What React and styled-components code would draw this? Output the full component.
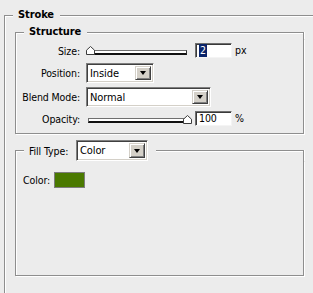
import React from "react";
import styled, { createGlobalStyle } from "styled-components";

const GlobalStyle = createGlobalStyle`
  html, body {
    margin: 0;
    padding: 0;
    background: #ececec;
    overflow: hidden;
  }
  body {
    font-family: "DejaVu Sans Condensed", "DejaVu Sans", sans-serif;
    font-stretch: condensed;
    font-size: 10.5px;
    letter-spacing: -0.1px;
    color: #000;
  }
`;

const GRAY = "#8e8e8e";

const Page = styled.div`
  width: 313px;
  height: 293px;
  overflow: hidden;
  box-sizing: border-box;
  padding: 8px 0 0 4px;
`;

const Group = styled.div`
  display: flex;
  flex-direction: column;
  width: ${(p) => p.$w}px;
  margin-top: ${(p) => p.$mt || 0}px;
`;

const Head = styled.div`
  display: flex;
  align-items: stretch;
  height: ${(p) => p.$h}px;
`;

const Corner = styled.div`
  width: 9px;
  box-sizing: border-box;
  margin-top: ${(p) => Math.floor(p.$h / 2)}px;
  border-top: 1px solid ${GRAY};
  border-left: 1px solid ${GRAY};
  box-shadow: inset 1px 1px 0 #fff;
`;

const HeadLine = styled.div`
  flex: 1;
  box-sizing: border-box;
  margin-top: ${(p) => Math.floor(p.$h / 2)}px;
  border-top: 1px solid ${GRAY};
  border-right: 1px solid ${GRAY};
  box-shadow: inset 0 1px 0 #fff, 1px 0 0 #fff;
`;

const Title = styled.div`
  display: flex;
  align-items: center;
  gap: 7px;
  padding: 0 ${(p) => p.$pr || 6}px 0 5px;
  font-weight: ${(p) => (p.$bold ? 700 : 400)};
  font-size: ${(p) => (p.$bold ? "11px" : "inherit")};
  line-height: 14px;
`;

const TitleText = styled.span`
  min-width: 40px;
`;

const Body = styled.div`
  box-sizing: border-box;
  height: ${(p) => (p.$h ? `${p.$h}px` : "auto")};
  padding: ${(p) => p.$pad};
  border-left: 1px solid ${GRAY};
  border-right: 1px solid ${GRAY};
  border-bottom: 1px solid ${GRAY};
  box-shadow: inset 1px 0 0 #fff, 1px 1px 0 #fff;
`;

const Form = styled.div`
  display: grid;
  grid-template-columns: 63px auto;
  grid-template-rows: 16px 20px 20px 15px;
  column-gap: 6px;
  row-gap: 4px;
  align-items: center;
`;

const Label = styled.div`
  text-align: right;
  white-space: nowrap;
`;

const Controls = styled.div`
  display: flex;
  align-items: flex-start;
  height: 100%;
`;

const SliderWrap = styled.div`
  position: relative;
  width: 106px;
  height: 100%;
`;

const Track = styled.div`
  box-sizing: border-box;
  height: 5px;
  margin: 7px 5px 0 2px;
  background: #fff;
  border-top: 1px solid #6f6f6f;
  border-left: 1px solid #6f6f6f;
  border-bottom: 2px solid #111;
  border-right: 1px solid #333;
`;

const Thumb = styled.svg`
  position: absolute;
  top: ${(p) => p.$top}px;
  width: 9px;
  height: 9px;
`;

const Field = styled.div`
  box-sizing: border-box;
  width: 37px;
  height: 15px;
  margin-left: 3px;
  padding-left: 3px;
  background: #fff;
  border: 1px solid;
  border-color: #6f6f6f #f4f4f4 #f4f4f4 #6f6f6f;
  box-shadow: inset 1px 1px 0 #3a3a3a;
  display: flex;
  align-items: center;
  line-height: 13px;
`;

const Selected = styled.span`
  background: #0a246a;
  color: #fff;
  padding: 0 1px;
`;

const Unit = styled.span`
  margin-left: 3px;
  line-height: 15px;
`;

const SelectBox = styled.div`
  box-sizing: border-box;
  width: ${(p) => p.$w}px;
  height: ${(p) => p.$h || 20}px;
  background: #fff;
  border: 1px solid;
  border-color: #7f7f7f #fff #fff #7f7f7f;
  box-shadow: inset 1px 1px 0 #404040, inset -1px -1px 0 #d4d0c8;
  display: flex;
  align-items: center;
  padding: 2px 2px 2px 3px;
  font-size: 11px;
  font-weight: 400;
`;

const SelectText = styled.span`
  flex: 1;
  padding-top: 1px;
`;

const DropButton = styled.div`
  box-sizing: border-box;
  width: 16px;
  height: 100%;
  background: #d4d0c8;
  border: 1px solid;
  border-color: #d4d0c8 #404040 #404040 #d4d0c8;
  box-shadow: inset 1px 1px 0 #fff, inset -1px -1px 0 #808080;
  display: flex;
  align-items: center;
  justify-content: center;

  &::after {
    content: "";
    border-left: 3.5px solid transparent;
    border-right: 3.5px solid transparent;
    border-top: 4px solid #000;
  }
`;

const ColorRow = styled.div`
  display: flex;
  align-items: center;
  gap: 4px;
`;

const Swatch = styled.div`
  box-sizing: border-box;
  width: 31px;
  height: 16px;
  background: ${(p) => p.$color};
  border: 1px solid #7d7d7d;
`;

const Slider = ({ value, top }) => (
  <SliderWrap>
    <Track />
    <Thumb $top={top} style={{ left: (value / 100) * 97 }} viewBox="0 0 9 9">
      <polygon
        points="0.5,8.5 0.5,4.2 4.5,0.5 8.5,4.2 8.5,8.5"
        fill="#fff"
        stroke="#3c3c3c"
        strokeWidth="1"
      />
    </Thumb>
  </SliderWrap>
);

const Select = ({ value, width, height }) => (
  <SelectBox $w={width} $h={height}>
    <SelectText>{value}</SelectText>
    <DropButton />
  </SelectBox>
);

const App = () => {
  return (
    <>
      <GlobalStyle />
      <Page>
        <Group $w={330}>
          <Head $h={14}>
            <Corner $h={14} />
            <Title $bold>Stroke</Title>
            <HeadLine $h={14} />
          </Head>
          <Body $h={290} $pad="3px 0 0 10px">
            <Group $w={289}>
              <Head $h={14}>
                <Corner $h={14} />
                <Title $bold>Structure</Title>
                <HeadLine $h={14} />
              </Head>
              <Body $pad="4px 0 7px 1px">
                <Form>
                  <Label>Size:</Label>
                  <Controls>
                    <Slider value={0} top={3} />
                    <Field>
                      <Selected>2</Selected>
                    </Field>
                    <Unit>px</Unit>
                  </Controls>

                  <Label>Position:</Label>
                  <Select value="Inside" width={68} />

                  <Label>Blend Mode:</Label>
                  <Select value="Normal" width={125} />

                  <Label>Opacity:</Label>
                  <Controls>
                    <Slider value={100} top={4} />
                    <Field>100</Field>
                    <Unit>%</Unit>
                  </Controls>
                </Form>
              </Body>
            </Group>

            <Group $w={289} $mt={6}>
              <Head $h={21}>
                <Corner $h={21} />
                <Title $pr={8}>
                  <TitleText>Fill Type:</TitleText>
                  <Select value="Color" width={72} height={21} />
                </Title>
                <HeadLine $h={21} />
              </Head>
              <Body $h={115} $pad="11px 0 0 7px">
                <ColorRow>
                  <span>Color:</span>
                  <Swatch $color="#4a7900" />
                </ColorRow>
              </Body>
            </Group>
          </Body>
        </Group>
      </Page>
    </>
  );
};

export default App;
